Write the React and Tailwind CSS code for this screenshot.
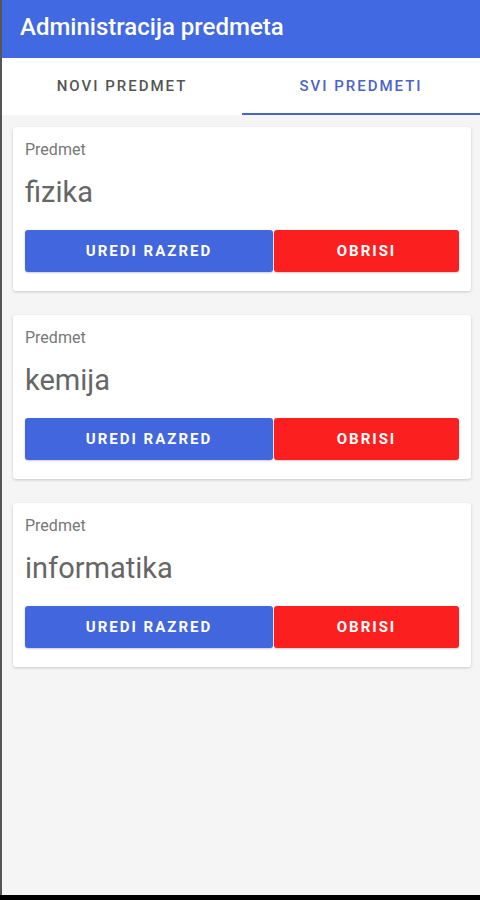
import React from 'react'

const predmeti = ['fizika', 'kemija', 'informatika'];

const PredmetCard = ({ naziv }) => {
    return (
        <div className="bg-white rounded-[3px] shadow-[0_1px_3px_rgba(0,0,0,0.18)] pt-[13px] pb-[19px] pl-[12px] pr-[12px]">
            <p className="text-[16px] leading-[20px] text-[#777]">Predmet</p>
            <p className="text-[29px] leading-[34px] text-[#666] mt-[15px]">{naziv}</p>
            <div className="flex mt-[21px] h-[42px]">
                <button className="w-[248px] bg-[#4166de] text-white text-[15px] font-bold tracking-[2px] rounded-[3px] shadow-[0_1px_2px_rgba(0,0,0,0.2)]">
                    UREDI RAZRED
                </button>
                <button className="flex-1 ml-[1px] bg-[#fb1f1f] text-white text-[15px] font-bold tracking-[2px] rounded-[3px] shadow-[0_1px_2px_rgba(0,0,0,0.2)]">
                    OBRISI
                </button>
            </div>
        </div>
    )
}

const App = () => {
    return (
        <div className="w-[480px] h-[900px] bg-black flex flex-col font-['Roboto',sans-serif]">
            <div className="flex flex-1 min-h-0">
                <div className="w-[2px] bg-[#555]"></div>
                <div className="flex-1 flex flex-col bg-[#f5f5f5]">
                    {/* header */}
                    <div className="h-[58px] bg-[#4169e1] flex items-center pl-[18px] pb-[4px]">
                        <h1 className="text-white text-[24px] font-medium">Administracija predmeta</h1>
                    </div>

                    {/* tabs */}
                    <div className="h-[57px] bg-white flex">
                        <div className="w-[240px] flex items-center justify-center text-[15px] font-medium tracking-[2px] text-[#555]">
                            NOVI PREDMET
                        </div>
                        <div className="flex-1 flex flex-col">
                            <div className="flex-1 flex items-center justify-center text-[15px] font-medium tracking-[2px] text-[#4a64c8] pt-[2px]">
                                SVI PREDMETI
                            </div>
                            <div className="h-[2px] bg-[#4a64c8]"></div>
                        </div>
                    </div>

                    {/* list */}
                    <div className="flex flex-col gap-[24px] pt-[12px] pl-[11px] pr-[9px]">
                        {predmeti.map((p) => (
                            <PredmetCard key={p} naziv={p} />
                        ))}
                    </div>
                </div>
            </div>
            <div className="h-[5px] bg-black"></div>
        </div>
    )
}

export default App
